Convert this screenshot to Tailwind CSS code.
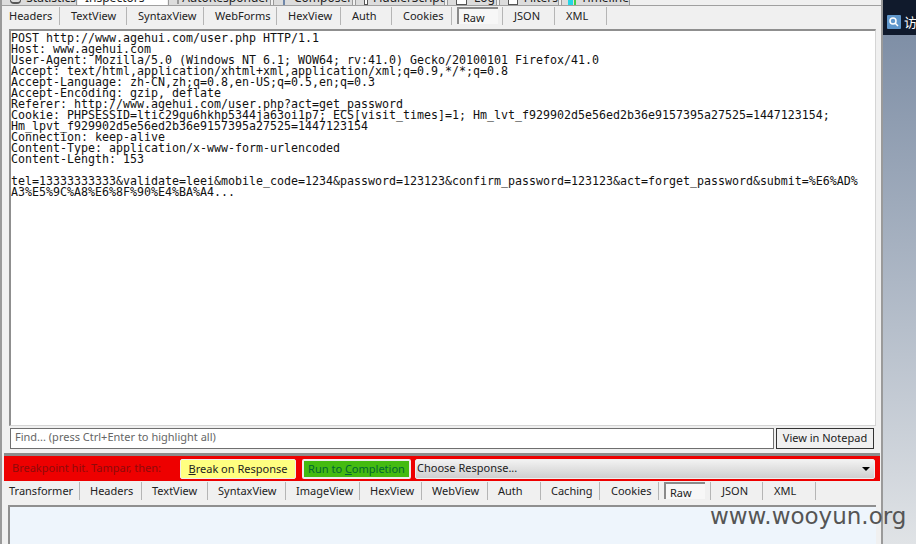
<!DOCTYPE html>
<html lang="en">
<head>
  <meta charset="UTF-8">
  <title>Inspectors</title>
  <script src="https://cdn.jsdelivr.net/npm/@tailwindcss/browser@4"></script>
</head>
<body class="relative w-[916px] h-[544px] overflow-hidden flex bg-[#8c9cb1] font-['Noto_Sans',sans-serif] text-[11px] text-[#222]">
  <div class="w-[883px] h-full flex flex-col bg-[#f0f0f0] border-l-2 border-r-2 border-[#9a9a9a] overflow-hidden shrink-0">
    <!-- main tabs, cut off by the crop -->
    <div class="h-[6px] flex overflow-hidden border-b border-[#a0a0a0] shrink-0 ml-[-2px] text-[12px] leading-[0px]">
      <div class="w-[77px] bg-[#dcdcdc] border-r border-[#999] flex"><span class="w-[13px] h-[4px] ml-[10px] mr-[5px] border-b-2 border-x border-[#555] rounded-b-full"></span><span class="-mt-[2px]">Statistics</span></div>
      <div class="w-[89px] bg-white pl-[7px] ml-[1px] flex"><span class="-mt-[2px]">Inspectors</span></div>
      <div class="w-[103px] ml-[1px] bg-[#dcdcdc] border-x border-[#999] flex"><span class="w-[14px] h-[4px] ml-[8px] mr-[3px] bg-[#999]"></span><span class="-mt-[2px]">AutoResponder</span></div>
      <div class="w-[80px] ml-[2px] bg-[#dcdcdc] border-x border-[#999] flex"><span class="w-[11px] h-[5px] ml-[9px] mr-[9px] bg-white border-x border-b border-[#6f86a8]"></span><span class="-mt-[2px]">Composer</span></div>
      <div class="w-[90px] ml-[2px] bg-[#dcdcdc] border-x border-[#999] flex"><span class="w-[12px] h-[5px] ml-[8px] mr-[5px] bg-white border-x border-b border-[#555]"></span><span class="-mt-[2px]">FiddlerScript</span></div>
      <div class="w-[50px] ml-[2px] bg-[#dcdcdc] border-x border-[#999] flex"><span class="w-[11px] h-[5px] ml-[8px] mr-[7px] bg-white border-x border-b border-[#555]"></span><span class="-mt-[2px]">Log</span></div>
      <div class="w-[60px] ml-[2px] bg-[#dcdcdc] border-x border-[#999] flex"><span class="w-[12px] h-[5px] ml-[8px] mr-[6px] bg-white border-x border-b border-[#555]"></span><span class="-mt-[2px]">Filters</span></div>
      <div class="w-[69px] ml-[2px] bg-[#dcdcdc] border-x border-[#999] flex"><span class="w-[11px] h-[5px] ml-[6px] bg-[#22d5e6]"></span><span class="w-[3px] h-[5px] ml-[1px] mr-[5px] bg-[#3fd04a]"></span><span class="-mt-[2px]">Timeline</span></div>
    </div>

    <!-- request tabs -->
    <div class="h-[23px] flex items-center pb-[3px] shrink-0 ml-[-2px]">
      <div class="w-[60px] h-[18px] leading-[18px] pl-[9px] border-r border-[#b5b5b5]">Headers</div>
      <div class="w-[67px] h-[18px] leading-[18px] pl-[11px] border-r border-[#b5b5b5]">TextView</div>
      <div class="w-[77px] h-[18px] leading-[18px] pl-[11px] border-r border-[#b5b5b5]">SyntaxView</div>
      <div class="w-[73px] h-[18px] leading-[18px] pl-[11px] border-r border-[#b5b5b5]">WebForms</div>
      <div class="w-[64px] h-[18px] leading-[18px] pl-[11px] border-r border-[#b5b5b5]">HexView</div>
      <div class="w-[51px] h-[18px] leading-[18px] pl-[11px] border-r border-[#b5b5b5]">Auth</div>
      <div class="w-[60px] h-[18px] leading-[18px] pl-[11px] border-r border-[#b5b5b5]">Cookies</div>
      <div class="w-[51px] h-[18px] flex border-r border-[#b5b5b5] pl-[5px]">
        <div class="w-[41px] h-[17px] leading-[18px] pl-[4px] bg-[#f7f7f7] border-l-2 border-t-2 border-[#8a8a8a]">Raw</div>
      </div>
      <div class="w-[52px] h-[18px] leading-[18px] pl-[11px] border-r border-[#b5b5b5]">JSON</div>
      <div class="w-[52px] h-[18px] leading-[18px] pl-[11px] border-r border-[#b5b5b5]">XML</div>
    </div>

    <!-- raw request -->
    <div class="ml-[7px] mr-[5px] flex flex-col shrink-0">
      <div class="h-[397px] bg-white border-t-2 border-l-2 border-[#8f8f8f] border-r border-b border-r-[#d5d5d5] border-b-[#d5d5d5] pt-[2px] overflow-hidden whitespace-pre font-['DejaVu_Sans_Mono',monospace] text-[11.63px] leading-[11.02px] text-[#111]">POST http://www.agehui.com/user.php HTTP/1.1
Host: www.agehui.com
User-Agent: Mozilla/5.0 (Windows NT 6.1; WOW64; rv:41.0) Gecko/20100101 Firefox/41.0
Accept: text/html,application/xhtml+xml,application/xml;q=0.9,*/*;q=0.8
Accept-Language: zh-CN,zh;q=0.8,en-US;q=0.5,en;q=0.3
Accept-Encoding: gzip, deflate
Referer: http://www.agehui.com/user.php?act=get_password
Cookie: PHPSESSID=ltic29gu6hkhp5344ja63oi1p7; ECS[visit_times]=1; Hm_lvt_f929902d5e56ed2b36e9157395a27525=1447123154;
Hm_lpvt_f929902d5e56ed2b36e9157395a27525=1447123154
Connection: keep-alive
Content-Type: application/x-www-form-urlencoded
Content-Length: 153

tel=13333333333&amp;validate=leei&amp;mobile_code=1234&amp;password=123123&amp;confirm_password=123123&amp;act=forget_password&amp;submit=%E6%AD%
A3%E5%9C%A8%E6%8F%90%E4%BA%A4...</div>
      <div class="h-[21px] mt-[2px] flex gap-[2px] shrink-0 pl-[1px] pr-[1px]">
        <div class="w-[764px] h-[21px] bg-white border border-[#6f6f6f] leading-[16px] pl-[4px] text-[#666]">Find... (press Ctrl+Enter to highlight all)</div>
        <div class="w-[98px] h-[21px] bg-[#f0f0f0] border border-[#333] text-center leading-[17px]">View in Notepad</div>
      </div>
    </div>

    <!-- breakpoint bar -->
    <div class="h-[3px] mt-[4px] ml-[2px] mr-[1px] shrink-0 bg-[#8c8c8c]"></div>
    <div class="h-[25px] ml-[2px] mr-[1px] bg-[#ee0000] flex items-center shrink-0">
      <div class="w-[176px] pl-[8px] text-[#8e0b0b]">Breakpoint hit. Tampar, then:</div>
      <div class="w-[116px] h-[20px] bg-[#ffff80] border border-[#eee] rounded-[2px] text-center leading-[18px]"><span class="underline">B</span>reak on Response</div>
      <div class="w-[109px] h-[20px] ml-[6px] bg-[#44bb11] border-2 border-[#eee] rounded-[2px] text-center leading-[16px] text-[#063]">Run to <span class="underline">C</span>ompletion</div>
      <div class="w-[460px] h-[20px] ml-[4px] flex items-center justify-between px-[1px] rounded-[2px] border border-[#eee] bg-linear-to-b from-[#f2f2f2] to-[#cfcfcf]">
        <span>Choose Response...</span>
        <span class="mr-[3px] w-0 h-0 border-x-[4px] border-x-transparent border-t-[4px] border-t-black"></span>
      </div>
    </div>

    <!-- response tabs -->
    <div class="h-[24px] flex items-center pb-[4px] shrink-0 ml-[-2px]">
      <div class="w-[80px] h-[18px] leading-[18px] pl-[9px] border-r border-[#b5b5b5]">Transformer</div>
      <div class="w-[62px] h-[18px] leading-[18px] pl-[10px] border-r border-[#b5b5b5]">Headers</div>
      <div class="w-[66px] h-[18px] leading-[18px] pl-[10px] border-r border-[#b5b5b5]">TextView</div>
      <div class="w-[78px] h-[18px] leading-[18px] pl-[10px] border-r border-[#b5b5b5]">SyntaxView</div>
      <div class="w-[74px] h-[18px] leading-[18px] pl-[10px] border-r border-[#b5b5b5]">ImageView</div>
      <div class="w-[62px] h-[18px] leading-[18px] pl-[10px] border-r border-[#b5b5b5]">HexView</div>
      <div class="w-[66px] h-[18px] leading-[18px] pl-[10px] border-r border-[#b5b5b5]">WebView</div>
      <div class="w-[53px] h-[18px] leading-[18px] pl-[10px] border-r border-[#b5b5b5]">Auth</div>
      <div class="w-[59px] h-[18px] leading-[18px] pl-[10px] border-r border-[#b5b5b5]">Caching</div>
      <div class="w-[59px] h-[18px] leading-[18px] pl-[11px] border-r border-[#b5b5b5]">Cookies</div>
      <div class="w-[52px] h-[18px] flex border-r border-[#b5b5b5] pl-[5px]">
        <div class="w-[41px] h-[17px] leading-[18px] pl-[4px] bg-[#f7f7f7] border-l-2 border-t-2 border-[#8a8a8a]">Raw</div>
      </div>
      <div class="w-[52px] h-[18px] leading-[18px] pl-[11px] border-r border-[#b5b5b5]">JSON</div>
      <div class="w-[53px] h-[18px] leading-[18px] pl-[11px] border-r border-[#b5b5b5]">XML</div>
    </div>
    <div class="flex-1 min-h-0 ml-[6px] mr-[5px] bg-[#eef5fc] border-t-2 border-l-2 border-[#8f8f8f]"></div>
  </div>

  <!-- desktop behind the window -->
  <div class="flex-1 flex flex-col">
    <div class="h-[35px] bg-[#101a2c] flex items-end pl-[4px] pb-[6px] gap-[3px]">
      <svg width="14" height="14" viewBox="0 0 14 14"><rect width="14" height="14" rx="1" fill="#5f97cc"/><circle cx="6" cy="6" r="3" fill="none" stroke="#fff" stroke-width="1.5"/><path d="M8 8l3 3" stroke="#fff" stroke-width="1.5"/></svg>
      <span class="text-white text-[13px] leading-[14px] font-['Noto_Sans_CJK_SC',sans-serif]">访</span>
    </div>
    <div class="flex-1 bg-linear-to-b from-[#7f8fa6] to-[#e0e3e6]"></div>
  </div>

  <!-- site watermark -->
  <div class="absolute left-[710px] top-[502px] text-[23px] leading-[28px] text-[#555] font-['DejaVu_Sans',sans-serif] whitespace-nowrap">www.wooyun.org</div>
</body>
</html>
